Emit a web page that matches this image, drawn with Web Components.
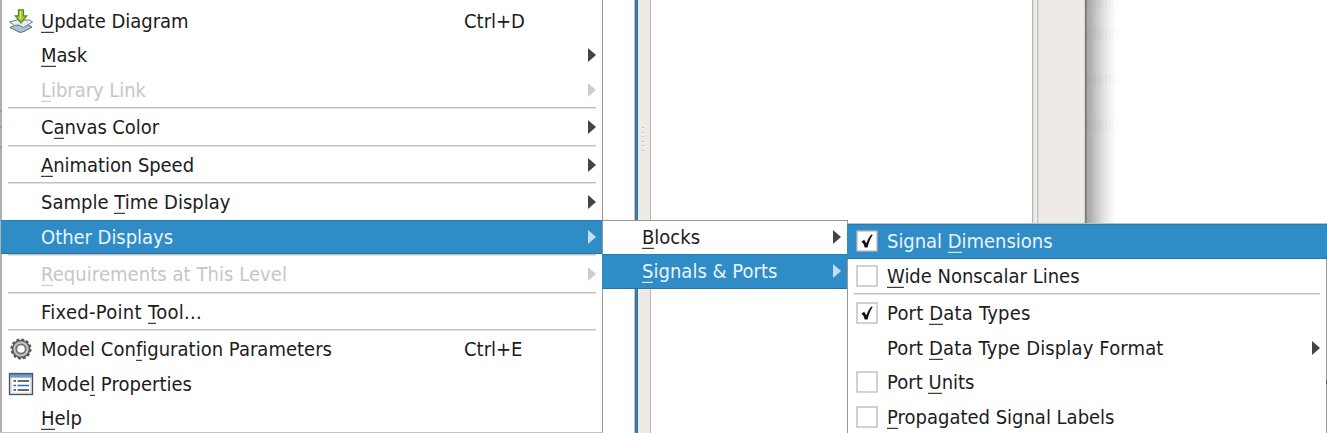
<!DOCTYPE html>
<html lang="en"><head><meta charset="utf-8"><title>Diagram menu</title>
<style>
html,body{margin:0;height:433px;overflow:hidden;background:#fff}
body{font:18px/34.5px "DejaVu Sans",sans-serif;color:#1c1c1c}
</style></head><body>
<app-desktop>
<pop-menu class="main" slot="menus">
<menu-row icon="update" keys="Ctrl+D" w="147.5"><u>U</u>pdate Diagram</menu-row>
<menu-row sub w="46"><u>M</u>ask</menu-row>
<menu-row sub off w="105"><u>L</u>ibrary Link</menu-row><menu-line></menu-line>
<menu-row sub w="118">C<u>a</u>nvas Color</menu-row><menu-line></menu-line>
<menu-row sub w="153"><u>A</u>nimation Speed</menu-row><menu-line></menu-line>
<menu-row sub w="189.500">Sample <u>T</u>ime Display</menu-row>
<menu-row sub hot w="132">Other Displays</menu-row><menu-line></menu-line>
<menu-row sub off w="246"><u>R</u>equirements at This Level</menu-row><menu-line></menu-line>
<menu-row w="161">Fixed-Point <u>T</u>ool...</menu-row><menu-line></menu-line>
<menu-row icon="gear" keys="Ctrl+E" w="291">Model Con<u>f</u>iguration Parameters</menu-row>
<menu-row icon="props" w="151">Mode<u>l</u> Properties</menu-row>
<menu-row w="41"><u>H</u>elp</menu-row>
</pop-menu>
<pop-menu class="second" slot="menus">
<menu-row sub w="58"><u>B</u>locks</menu-row>
<menu-row sub hot w="135.500"><u>S</u>ignals &amp; Ports</menu-row>
</pop-menu>
<pop-menu class="third" slot="menus">
<menu-row icon="on" hot w="165.500">Signal <u>D</u>imensions</menu-row>
<menu-row icon="box" w="192.500"><u>W</u>ide Nonscalar Lines</menu-row><menu-line></menu-line>
<menu-row icon="on" w="143.500">Port <u>D</u>ata Types</menu-row>
<menu-row sub w="276.500">Port <u>D</u>ata Type Display Format</menu-row>
<menu-row icon="box" w="87.500">Port <u>U</u>nits</menu-row>
<menu-row icon="box" w="227.500"><u>P</u>ropagated Signal Labels</menu-row>
</pop-menu>
</app-desktop>
<script>
const mount=(el,html)=>{el.attachShadow({mode:'open'}).innerHTML=html};
customElements.define('app-desktop',class extends HTMLElement{
constructor(){super();mount(this,`<style>
:host{display:block;position:relative;width:1327px;height:433px;overflow:hidden}
.back{display:grid;height:433px;grid-template-columns:634px 4px 13px 381px 54px 31px 1fr}
.edge{background:linear-gradient(90deg,#c5c3bf 0 1px,#4a7294 1px 2px,#2d82bd 2px 3px,#3474a6 3px)}
.split{background:#eeebe6;border-right:1px solid #b9b7b3;display:flex;justify-content:center;align-items:flex-start}
.dots{margin:127px 2px 0 0;width:2px;height:26px;background:repeating-linear-gradient(#c5c2bd 0 1px,#f7f6f4 1px 2px,#eeebe6 2px 4.55px)}
.rail{background:linear-gradient(90deg,#b9b7b4 0 1px,#dfddd9 1px 2px,#efece7 2px 5px,#c4c4c4 5px 6px,#e0deda 6px 7px,#eeebe6 7px 52px,#d6d3ce 52px 53px,#7f7f7f 53px)}
.shadow{background:linear-gradient(90deg,#858585 0 1px,#a7a7a7 1px,#b2b2b2 5px,#cacaca 11px,#e3e3e3 18px,#f5f5f5 25px,#fff 31px);display:flex;flex-direction:column;gap:34px}
.shadow i{width:36px;height:11px;flex:none;margin-left:1px;background:repeating-linear-gradient(90deg,#8881 0 2px,transparent 2px 3.6px);-webkit-mask-image:linear-gradient(90deg,#000,#000 50%,transparent)}
.shadow i:first-child{height:9px;margin-bottom:-14px}
.trace{position:absolute;left:0;width:1px;height:2px;background:#e56c70}
.mark{position:absolute;left:1326px;top:380px;width:1px;height:4px;background:#555}
</style><div class="back"><span></span><div class="edge"></div><div class="split"><div class="dots"></div></div><span></span><div class="rail"></div><div class="shadow"><i></i><i></i><i></i><i></i></div><span></span></div>
<slot name="menus"></slot><b class="trace" style="top:110px"></b><b class="trace" style="top:126px"></b><b class="trace" style="top:146px"></b><b class="mark"></b>`)}});
customElements.define('pop-menu',class extends HTMLElement{
constructor(){super();mount(this,`<style>
:host{display:flex;flex-direction:column;position:absolute;box-sizing:border-box;background:#fff;border:1px solid #999793}
:host(.main){left:0;top:-4px;width:603px;height:437px;padding-top:6.5px;border-left:2px solid #b0b0b0;border-bottom-color:#c5c5c5}
:host(.second){left:602px;top:219.5px;width:246px;height:69px}
:host(.second) ::slotted(menu-row:first-child){height:33.5px}
:host(.third){left:847px;top:223px;width:480px;height:220px;border-top-color:#a9c5d8}
</style><slot></slot>`)}});
customElements.define('menu-line',class extends HTMLElement{
constructor(){super();mount(this,`<style>:host{display:block;height:3px;flex:none;padding:0 6px}div{height:1px;border-bottom:1px solid #e2e2e2;background:#c0c0c0}</style><div></div>`)}});
const icons={
update:`<svg width="26" height="26" viewBox="0 0 26 26"><path d="M2 19.500l6-2.500h12l4 2-8 4.500-4 1-5-2.500z" fill="#a9c3d2" stroke="#5b6c74"/><path d="M1.500 14l7-2 13 0 3 2-9 5.500-5-2.500-4 .5z" fill="#e5eff3" stroke="#6b7c83"/><path d="M10.500 1.800h5v6h3.200L13 15 7.300 7.800h3.200z" fill="#a3ce32" stroke="#5c852a" stroke-width="1.200"/><path d="M12.500 3v8" stroke="#dbed90"/></svg>`,
gear:`<svg width="26" height="26" viewBox="-13 -13 26 26"><circle r="8.500" fill="#b8b8b8" stroke="#595959" stroke-width="1.500"/><circle r="9.400" fill="none" stroke="#595959" stroke-width="2.300" stroke-dasharray="2.900 2.020"/><circle r="7" fill="#c6c6c6"/><circle r="4.700" fill="#fff" stroke="#707070" stroke-width="1.800"/></svg>`,
props:`<svg width="26" height="26" viewBox="0 0 26 26"><rect x="1.500" y="2.500" width="23" height="21" fill="#dfe3e7" stroke="#475460" stroke-width="1.300"/><rect x="2" y="3" width="22" height="3.500" fill="#6e9dcc"/><path d="M2 3h22" stroke="#3d6b93"/><rect x="4" y="7" width="18" height="14.500" fill="#fff"/><g stroke-width="1.500"><path d="M5.500 10h2.500m1.500 0h11.500M5.500 19h2.500m1.500 0h11.500" stroke="#343b42"/><path d="M5.500 14.500h2.500m1.500 0h11.500" stroke="#216eb3"/></g></svg>`,
box:`<svg width="22" height="22"><rect x="1" y="1" width="20" height="20" fill="#fff" stroke="#bdbbb9" stroke-width="1.300"/></svg>`,
on:`<svg width="22" height="22"><rect x="1" y="1" width="20" height="20" fill="#fff" stroke="#bdbbb9" stroke-width="1.300"/><path d="M5.500 11.500l2.700-1.700 2 3.500Q12 8 15.300 4.500l1.400.500Q13.600 9 11.600 17.500H8.700Q8 13.500 5.500 11.500z" fill="#111"/></svg>`};
customElements.define('menu-row',class extends HTMLElement{
connectedCallback(){const a=n=>this.getAttribute(n);
mount(this,`<style>
:host{display:flex;flex:none;height:34.5px;box-sizing:border-box;align-items:center;color:#1c1c1c}
:host([off]){color:#c6c6c6}
:host([hot]){background:#308cc6;color:#eaf4fb;box-shadow:inset 0 1px #287bb0,inset 0 -1px #2874a7;margin:0 -1px}
:host([hot]) .icon{width:40px}:host([hot]) .arrow{margin-right:7px;color:#c5dff0}
.icon{flex:none;width:39px;display:flex;box-sizing:border-box;padding-left:6px}
.icon.check{padding-left:8px}:host([hot]) .icon.check{padding-left:9px}
.label{white-space:pre;font-size:18px;line-height:34px;flex:none}
.label,.key{transform:translateY(.3px) scaleY(1.05)}
::slotted(u){text-decoration:none;padding-bottom:1px;background:linear-gradient(currentColor,currentColor) 0 100%/100% 1.5px no-repeat}
.key{position:absolute;left:462px;white-space:pre}
.arrow{margin-left:auto;margin-right:6px;width:8px;height:14px;color:#444}
:host([off]) .arrow{color:#ccc}
</style><span class="icon ${a('icon')=='on'||a('icon')=='box'?'check':''}">${icons[a('icon')]||''}</span><span class="label"><slot></slot></span>${a('keys')?`<span class="key">${a('keys')}</span>`:''}${this.hasAttribute('sub')?'<svg class="arrow" viewBox="0 0 8 14"><path d="M0 0L8 7 0 14z" fill="currentColor"/></svg>':''}`);
const l=this.shadowRoot.querySelector('.label'),n=this.textContent.length;
requestAnimationFrame(()=>{l.style.letterSpacing=((+a('w')-l.getBoundingClientRect().width)/n)+'px'});
}});
</script></body></html>
